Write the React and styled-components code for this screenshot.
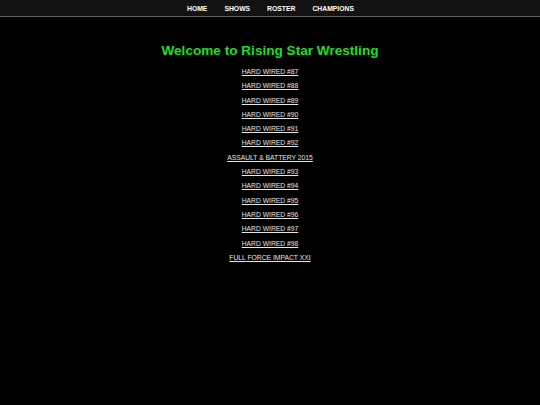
import React from "react";
import styled, { createGlobalStyle } from "styled-components";

const Global = createGlobalStyle`
  html, body { margin: 0; padding: 0; background: #000; }
  body { font-family: "Liberation Sans", Arial, sans-serif; }
`;

const Nav = styled.nav`
  height: 16px;
  background: #121212;
  border-bottom: 1px solid #5a6a5a;
  display: flex;
  justify-content: center;
  align-items: center;
  gap: 17px;
  padding-left: 1px;
`;

const NavItem = styled.a`
  color: #fff;
  font-size: 6.8px;
  font-weight: bold;
  text-decoration: none;
`;

const Main = styled.main`
  display: flex;
  flex-direction: column;
  align-items: center;
  padding-top: 25px;
`;

const Title = styled.h1`
  color: #22dd22;
  font-size: 13.6px;
  font-weight: bold;
  margin: 0 0 5px;
  line-height: 18px;
`;

const List = styled.div`
  display: flex;
  flex-direction: column;
  align-items: center;
`;

const Show = styled.a`
  color: #e6e6e6;
  font-size: 6.75px;
  line-height: 14.3px;
  text-decoration: underline;
`;

const shows = [
  "HARD WIRED #87",
  "HARD WIRED #88",
  "HARD WIRED #89",
  "HARD WIRED #90",
  "HARD WIRED #91",
  "HARD WIRED #92",
  "ASSAULT & BATTERY 2015",
  "HARD WIRED #93",
  "HARD WIRED #94",
  "HARD WIRED #95",
  "HARD WIRED #96",
  "HARD WIRED #97",
  "HARD WIRED #98",
  "FULL FORCE IMPACT XXI",
];

export default function App() {
  return (
    <>
      <Global />
      <Nav>
        <NavItem>HOME</NavItem>
        <NavItem>SHOWS</NavItem>
        <NavItem>ROSTER</NavItem>
        <NavItem>CHAMPIONS</NavItem>
      </Nav>
      <Main>
        <Title>Welcome to Rising Star Wrestling</Title>
        <List>
          {shows.map((s) => (
            <Show key={s}>{s}</Show>
          ))}
        </List>
      </Main>
    </>
  );
}
